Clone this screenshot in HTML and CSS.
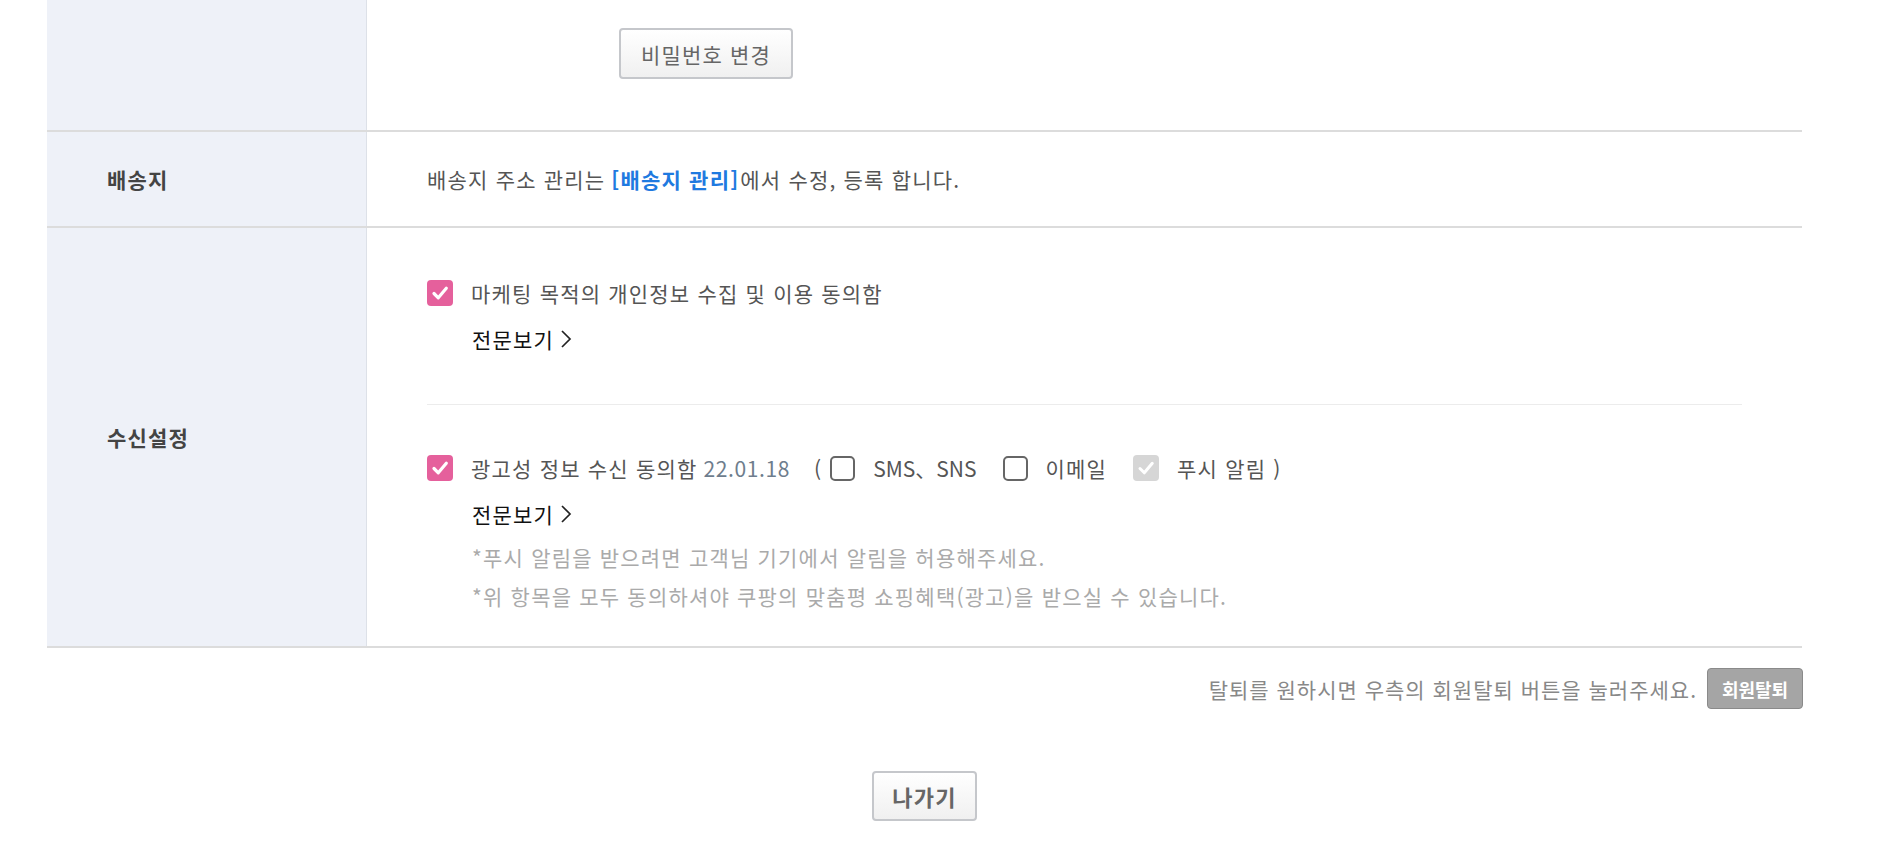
FILE: index.html
```html
<!DOCTYPE html>
<html lang="ko">
<head>
    <meta charset="UTF-8" />
    <meta name="viewport" content="width=device-width, initial-scale=1.0" />
    <link rel="stylesheet" href="styles.css">
</head>
<body>
    <div class="member-table">
        <!-- 비밀번호 -->
        <div class="row row-password">
            <div class="th"></div>
            <div class="td">
                <button class="btn-light btn-password">비밀번호 변경</button>
            </div>
        </div>

        <!-- 배송지 -->
        <div class="row row-address">
            <div class="th">배송지</div>
            <div class="td">
                배송지 주소 관리는 <a href="#" class="link">[배송지 관리]</a>에서 수정, 등록 합니다.
            </div>
        </div>

        <!-- 수신설정 -->
        <div class="row row-receive">
            <div class="th">수신설정</div>
            <div class="td">
                <div class="agree agree-first">
                    <div class="agree-line">
                        <span class="check on">
                            <svg width="26" height="26" viewBox="0 0 26 26"><path d="M7 13.5 L11.3 17.8 L19.3 8.3" fill="none" stroke="#fff" stroke-width="3.2" stroke-linecap="round" stroke-linejoin="round"/></svg>
                        </span>
                        마케팅 목적의 개인정보 수집 및 이용 동의함
                    </div>
                    <a href="#" class="view-all">전문보기
                        <svg width="12" height="22" viewBox="0 0 12 22"><path d="M2 3 L10 11 L2 19" fill="none" stroke="#222" stroke-width="1.7"/></svg>
                    </a>
                </div>

                <div class="agree-sep"></div>

                <div class="agree agree-second">
                    <div class="agree-line">
                        <span class="check on">
                            <svg width="26" height="26" viewBox="0 0 26 26"><path d="M7 13.5 L11.3 17.8 L19.3 8.3" fill="none" stroke="#fff" stroke-width="3.2" stroke-linecap="round" stroke-linejoin="round"/></svg>
                        </span>
                        광고성 정보 수신 동의함 <span class="date">22.01.18</span>
                        <span class="paren">(</span>
                        <span class="check off"></span>
                        <span class="opt opt-latin">SMS、SNS</span>
                        <span class="check off"></span>
                        <span class="opt">이메일</span>
                        <span class="check disabled">
                            <svg width="26" height="26" viewBox="0 0 26 26"><path d="M7 13.5 L11.3 17.8 L19.3 8.3" fill="none" stroke="#fff" stroke-width="3" stroke-linecap="round" stroke-linejoin="round"/></svg>
                        </span>
                        <span class="opt">푸시 알림 )</span>
                    </div>
                    <a href="#" class="view-all">전문보기
                        <svg width="12" height="22" viewBox="0 0 12 22"><path d="M2 3 L10 11 L2 19" fill="none" stroke="#222" stroke-width="1.7"/></svg>
                    </a>
                    <p class="note">*푸시 알림을 받으려면 고객님 기기에서 알림을 허용해주세요.</p>
                    <p class="note">*위 항목을 모두 동의하셔야 쿠팡의 맞춤평 쇼핑혜택(광고)을 받으실 수 있습니다.</p>
                </div>
            </div>
        </div>
    </div>

    <div class="withdraw">
        <span class="withdraw-text">탈퇴를 원하시면 우측의 회원탈퇴 버튼을 눌러주세요.</span>
        <button class="btn-withdraw">회원탈퇴</button>
    </div>

    <div class="exit">
        <button class="btn-light btn-exit">나가기</button>
    </div>
</body>
</html>
```

FILE: styles.css
```css
body {
    margin: 0;
    font-family: "Noto Sans CJK KR", "Noto Sans", sans-serif;
    letter-spacing: 1.2px;
    background-color: #ffffff;
    color: #555;
}
.member-table {
    margin: 0 80px 0 47px;
}
.row {
    display: grid;
    grid-template-columns: 320px 1fr;
    border-bottom: 2px solid #dcdcdc;
}
.th {
    display: flex;
    align-items: center;
    padding-left: 60px;
    background-color: #eef1f8;
    border-right: 1px solid #dde1e8;
    font-size: 21px;
    font-weight: bold;
    color: #444;
}
.td {
    padding-left: 60px;
    font-size: 21px;
}
/* Password row */
.row-password .td {
    height: 130px;
    box-sizing: border-box;
    padding-top: 28px;
    padding-left: 252px;
}
.btn-light {
    font-family: inherit;
    letter-spacing: 1.2px;
    background: linear-gradient(#ffffff, #f0f0f0);
    border: 2px solid #c5c7cb;
    border-radius: 4px;
    color: #666;
    cursor: pointer;
}
.btn-password {
    width: 174px;
    height: 51px;
    font-size: 21px;
    padding: 0;
}
/* Address row */
.row-address .td {
    height: 94px;
    display: flex;
    align-items: center;
}
.link {
    color: #1f7ae0;
    font-weight: bold;
    text-decoration: none;
    margin: 0 1px 0 6px;
}
/* Receive row */
.row-receive .td {
    padding-top: 42px;
    padding-right: 60px;
    padding-bottom: 30px;
}
.agree-line {
    display: flex;
    align-items: center;
    height: 46px;
    color: #555;
}
.check {
    display: inline-flex;
    width: 26px;
    height: 26px;
    box-sizing: border-box;
    border-radius: 4px;
    margin-right: 18px;
    flex-shrink: 0;
}
.check.on {
    background-color: #e5609c;
}
.check.off {
    border: 2px solid #666;
    border-radius: 5px;
    width: 25px;
    height: 25px;
}
.check.disabled {
    background-color: #d6d6d6;
}
.date {
    color: #6e7d8d;
    margin-left: 6px;
    letter-spacing: 0.6px;
}
.paren {
    margin: 0 8px 0 24px;
}
.opt {
    margin-right: 26px;
}
.opt-latin {
    letter-spacing: 0;
}
.opt:last-child {
    margin-right: 0;
}
.view-all {
    display: flex;
    align-items: center;
    height: 46px;
    padding-left: 45px;
    color: #111;
    text-decoration: none;
}
.view-all svg {
    margin-left: 6px;
}
.agree-sep {
    height: 1px;
    background-color: #ececec;
    margin: 42px 0 40px;
}
.note {
    margin: 0;
    padding-left: 45px;
    height: 39px;
    line-height: 39px;
    color: #aaa;
}
.note:first-of-type {
    margin-top: 1px;
}
/* Withdraw */
.withdraw {
    display: flex;
    justify-content: flex-end;
    align-items: center;
    gap: 10px;
    margin: 20px 79px 0 0;
}
.withdraw-text {
    font-size: 21px;
    letter-spacing: 1px;
    color: #888;
}
.btn-withdraw {
    font-family: inherit;
    width: 96px;
    height: 41px;
    padding: 0;
    background-color: #a5a5a5;
    border: 1px solid #8a8a8a;
    border-radius: 4px;
    color: #fff;
    font-weight: bold;
    font-size: 18px;
    cursor: pointer;
}
.exit {
    display: flex;
    justify-content: center;
    margin: 62px 80px 0 47px;
}
.btn-exit {
    width: 105px;
    height: 50px;
    padding: 0;
    font-size: 22px;
    font-weight: bold;
}
```
